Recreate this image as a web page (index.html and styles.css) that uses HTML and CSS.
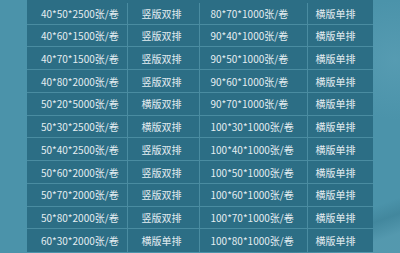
FILE: index.html
```html
<!DOCTYPE html>
<html lang="zh">
<head>
<meta charset="utf-8">
<title>规格表</title>
<link rel="stylesheet" href="styles.css">
</head>
<body>
<main class="page">
  <table class="spec">
    <colgroup>
      <col class="c1"><col class="c2"><col class="c3"><col class="c4">
    </colgroup>
    <tbody>
      <tr><td class="p1">40*50*2500张/卷</td><td class="p2">竖版双排</td><td class="p3">80*70*1000张/卷</td><td class="p4">横版单排</td></tr>
      <tr><td class="p1">40*60*1500张/卷</td><td class="p2">竖版双排</td><td class="p3">90*40*1000张/卷</td><td class="p4">横版单排</td></tr>
      <tr><td class="p1">40*70*1500张/卷</td><td class="p2">竖版双排</td><td class="p3">90*50*1000张/卷</td><td class="p4">横版单排</td></tr>
      <tr><td class="p1">40*80*2000张/卷</td><td class="p2">竖版双排</td><td class="p3">90*60*1000张/卷</td><td class="p4">横版单排</td></tr>
      <tr><td class="p1">50*20*5000张/卷</td><td class="p2">横版双排</td><td class="p3">90*70*1000张/卷</td><td class="p4">横版单排</td></tr>
      <tr><td class="p1">50*30*2500张/卷</td><td class="p2">横版双排</td><td class="p3">100*30*1000张/卷</td><td class="p4">横版单排</td></tr>
      <tr><td class="p1">50*40*2500张/卷</td><td class="p2">竖版双排</td><td class="p3">100*40*1000张/卷</td><td class="p4">横版单排</td></tr>
      <tr><td class="p1">50*60*2000张/卷</td><td class="p2">竖版双排</td><td class="p3">100*50*1000张/卷</td><td class="p4">横版单排</td></tr>
      <tr><td class="p1">50*70*2000张/卷</td><td class="p2">竖版双排</td><td class="p3">100*60*1000张/卷</td><td class="p4">横版单排</td></tr>
      <tr><td class="p1">50*80*2000张/卷</td><td class="p2">竖版双排</td><td class="p3">100*70*1000张/卷</td><td class="p4">横版单排</td></tr>
      <tr><td class="p1">60*30*2000张/卷</td><td class="p2">横版单排</td><td class="p3">100*80*1000张/卷</td><td class="p4">横版单排</td></tr>
    </tbody>
  </table>
</main>
</body>
</html>
```
FILE: styles.css
```css
html, body {
  margin: 0;
  padding: 0;
}
body {
  width: 400px;
  height: 253px;
  overflow: hidden;
  background-color: #4b93aa;
  background-image:
    linear-gradient(160deg, rgba(255,255,255,0) 0%, rgba(255,255,255,0) 86%, rgba(40,100,120,0.25) 90%, rgba(255,255,255,0.05) 95%),
    radial-gradient(circle at 395px 60px, rgba(120,180,200,0.25), rgba(120,180,200,0) 60px);
  font-family: "Noto Sans CJK SC", "Noto Sans", sans-serif;
}
.page {
  display: flex;
  justify-content: flex-start;
  padding-left: 27px;
}
.spec {
  border-collapse: collapse;
  table-layout: fixed;
  width: 346px;
  background: #2c6e85;
  border-top: 3px solid #2c6e85;
  color: #e4edf1;
  font-size: 10px;
  line-height: 14px;
}
.c1 { width: 100px; }
.c2 { width: 72px; }
.c3 { width: 108px; }
.c4 { width: 66px; }
.spec td {
  height: 22.74px;
  box-sizing: border-box;
  padding: 1px 0 0 0;
  border-top: 1px solid #4a8ca1;
  white-space: nowrap;
  vertical-align: middle;
}
.spec td + td {
  border-left: 1px solid #4a8ca1;
}
.p1 { padding-left: 14px !important; }
.p2 { padding-left: 14px !important; }
.p3 { padding-left: 11px !important; }
.p4 { padding-left: 8px !important; }
```
